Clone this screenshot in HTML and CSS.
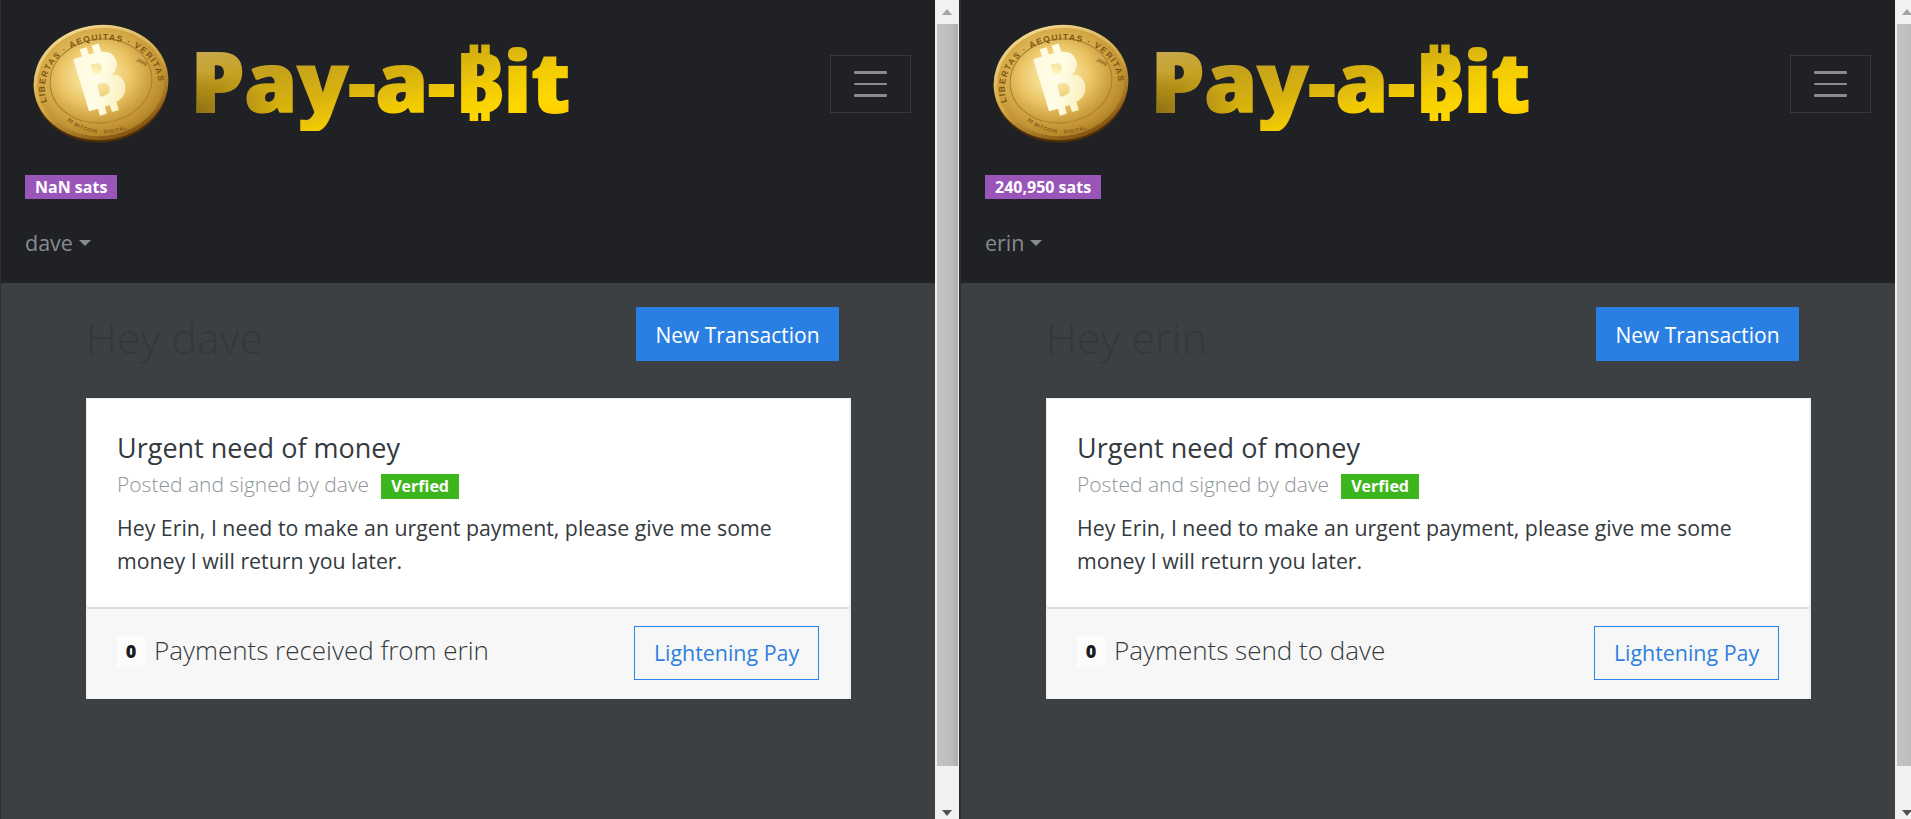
FILE: index.html
```html
<!DOCTYPE html>
<html lang="en">
<head>
<meta charset="utf-8">
<title>Pay-a-Bit</title>
<link rel="stylesheet" href="styles.css">
</head>
<body>
<svg class="defs" width="0" height="0" aria-hidden="true">
  <defs>
    <filter id="heavy" x="-5%" y="-5%" width="110%" height="110%">
      <feMorphology operator="dilate" radius="1 0.4"/>
    </filter>
    <radialGradient id="coinFace" cx="45%" cy="40%" r="68%">
      <stop offset="0" stop-color="#f6d77e"/>
      <stop offset=".6" stop-color="#d6a947"/>
      <stop offset=".85" stop-color="#b98a2c"/>
      <stop offset="1" stop-color="#8f6114"/>
    </radialGradient>
    <linearGradient id="coinRim" x1="0.2" y1="0" x2="0.6" y2="1">
      <stop offset="0" stop-color="#f4dc98"/>
      <stop offset=".55" stop-color="#d2a540"/>
      <stop offset="1" stop-color="#85550f"/>
    </linearGradient>
    <radialGradient id="coinInner" cx="45%" cy="42%" r="62%">
      <stop offset="0" stop-color="#fff6c4"/>
      <stop offset=".55" stop-color="#ecc768"/>
      <stop offset="1" stop-color="#c0902f"/>
    </radialGradient>
    <linearGradient id="coinMark" x1="0" y1="0" x2="1" y2="1">
      <stop offset="0" stop-color="#fff8d6"/>
      <stop offset=".5" stop-color="#fffde8"/>
      <stop offset="1" stop-color="#f8e6a4"/>
    </linearGradient>
    <path id="coinArc" d="M14 78 A57 47 -6 1 1 124 72"/>
    <path id="coinArcLow" d="M34 96 A52 43 -6 0 0 118 86"/>
    <symbol id="coin" viewBox="0 0 136 119">
      <ellipse cx="68" cy="60.500" rx="67.500" ry="58" transform="rotate(-6 68 60.500)" fill="#4f2e08"/>
      <ellipse cx="68" cy="58.500" rx="67.500" ry="57.500" transform="rotate(-6 68 58.500)" fill="url(#coinRim)"/>
      <ellipse cx="68" cy="58" rx="64" ry="54" transform="rotate(-6 68 58)" fill="url(#coinFace)"/>
      <ellipse cx="68" cy="57" rx="51" ry="42" transform="rotate(-6 68 57)" fill="url(#coinInner)" stroke="#a97d26" stroke-width="1"/>
      <text class="coin-ring"><textPath href="#coinArc">LIBERTAS · AEQUITAS · VERITAS</textPath></text>
      <text class="coin-ring-small"><textPath href="#coinArcLow">30 BITCOIN · DIGITAL</textPath></text>
      <text class="coin-year" x="103" y="37" transform="rotate(28 103 37)">2009</text>
      <g transform="translate(66 56) rotate(-17) scale(1.2 1)"><text class="coin-mark" x="0" y="27">₿</text></g>
    </symbol>
  </defs>
</svg>

<section class="pane">
  <header class="top">
    <div class="top-row">
      <div class="brand">
        <svg class="coin-img" aria-hidden="true"><use href="#coin"/></svg>
        <span class="wordmark">Pay-a-₿it</span>
      </div>
      <button class="toggler" type="button" aria-label="Menu"><span></span><span></span><span></span></button>
    </div>
    <span class="sats">NaN sats</span>
    <div class="user">dave<i class="caret"></i></div>
  </header>
  <main class="content">
    <div class="head-row">
      <h1 class="hey">Hey dave</h1>
      <button class="btn-new" type="button">New Transaction</button>
    </div>
    <article class="card">
      <div class="card-body">
        <h2 class="card-title">Urgent need of money</h2>
        <div class="card-sub"><span class="sub-text">Posted and signed by dave</span><span class="verified">Verfied</span></div>
        <p class="card-text">Hey Erin, I need to make an urgent payment, please give me some money I will return you later.</p>
      </div>
      <div class="card-foot">
        <div class="count"><span class="zero">0</span><span class="count-text">Payments received from erin</span></div>
        <button class="btn-pay" type="button">Lightening Pay</button>
      </div>
    </article>
  </main>
</section>
<div class="scroll"><div class="arrow-up"></div><div class="thumb"></div><div class="arrow-down"></div></div>

<section class="pane">
  <header class="top">
    <div class="top-row">
      <div class="brand">
        <svg class="coin-img" aria-hidden="true"><use href="#coin"/></svg>
        <span class="wordmark">Pay-a-₿it</span>
      </div>
      <button class="toggler" type="button" aria-label="Menu"><span></span><span></span><span></span></button>
    </div>
    <span class="sats">240,950 sats</span>
    <div class="user">erin<i class="caret"></i></div>
  </header>
  <main class="content">
    <div class="head-row">
      <h1 class="hey">Hey erin</h1>
      <button class="btn-new" type="button">New Transaction</button>
    </div>
    <article class="card">
      <div class="card-body">
        <h2 class="card-title">Urgent need of money</h2>
        <div class="card-sub"><span class="sub-text">Posted and signed by dave</span><span class="verified">Verfied</span></div>
        <p class="card-text">Hey Erin, I need to make an urgent payment, please give me some money I will return you later.</p>
      </div>
      <div class="card-foot">
        <div class="count"><span class="zero">0</span><span class="count-text">Payments send to dave</span></div>
        <button class="btn-pay" type="button">Lightening Pay</button>
      </div>
    </article>
  </main>
</section>
<div class="scroll"><div class="arrow-up"></div><div class="thumb"></div><div class="arrow-down"></div></div>
</body>
</html>
```
FILE: styles.css
```css
* { box-sizing: border-box; }
html, body { height: 100%; }
body {
  margin: 0;
  width: 1911px;
  height: 819px;
  overflow: hidden;
  display: flex;
  font-family: "Open Sans", "Noto Sans", sans-serif;
  color: #343a40;
  background: #3d4043;
}
.defs { position: absolute; }
.pane {
  flex: 0 0 935px;
  height: 819px;
  display: flex;
  flex-direction: column;
  background: #3d4043;
  border-left: 1px solid #2c2e32;
}
.top {
  height: 283px;
  flex: none;
  background: #1f2125;
  padding: 24px 24px 0 24px;
  display: flex;
  flex-direction: column;
  align-items: flex-start;
}
.top-row {
  width: 100%;
  height: 118px;
  display: flex;
  align-items: center;
  justify-content: space-between;
}
.brand { display: flex; align-items: center; padding-left: 8px; }
.coin-img { width: 136px; height: 119px; flex: none; }
.coin-ring { font: 700 8.5px "Liberation Sans", sans-serif; fill: #7c5714; letter-spacing: 1.3px; }
.coin-ring-small { font: 700 5px "Liberation Sans", sans-serif; fill: #7c5714; letter-spacing: .6px; }
.coin-year { font: 700 5px "Liberation Sans", sans-serif; fill: #8a6420; }
.coin-mark { font: 800 76px "Noto Sans", sans-serif; fill: url(#coinMark); text-anchor: middle; }
.wordmark {
  margin-left: 22px;
  margin-top: -5px;
  font-family: "Open Sans", "Noto Sans", sans-serif;
  font-weight: 800;
  font-size: 84.5px;
  line-height: 100px;
  white-space: nowrap;
  filter: url(#heavy);
  background-image:
    radial-gradient(ellipse 90px 42px at 0 82%, #8a6c14 0, rgba(138,108,20,0) 100%),
    linear-gradient(165deg, #e4ad36 0, #c8a84c 11%, #c4a01c 30%, #d8b20e 50%, #f2cb04 66%, #ffd700 82%, #ffc000 100%);
  -webkit-background-clip: text;
  background-clip: text;
  color: transparent;
}
.toggler {
  width: 81px;
  height: 58px;
  margin-top: 2px;
  padding: 0 23px;
  background: transparent;
  border: 1px solid #36383c;
  display: flex;
  flex-direction: column;
  justify-content: center;
  gap: 9px;
}
.toggler span { display: block; height: 2.5px; border-radius: 1px; background: #8a8b8d; }
.sats {
  margin-top: 33px;
  height: 24px;
  padding: 0 10px;
  background: #9a55b9;
  color: #fff;
  font-size: 16px;
  font-weight: 700;
  line-height: 24px;
}
.user {
  margin-top: 27px;
  font-size: 21.5px;
  line-height: 34px;
  color: #878b8f;
  display: flex;
  align-items: center;
}
.caret {
  margin: 0 0 0 6px;
  border-top: 6px solid #878b8f;
  border-left: 6.5px solid transparent;
  border-right: 6.5px solid transparent;
}
.content { padding: 24px 84px 0 85px; }
.head-row {
  display: flex;
  align-items: flex-start;
  justify-content: space-between;
  padding: 0 12px 0 0;
}
.hey {
  margin: 7px 0 0;
  font-size: 43px;
  line-height: 48px;
  font-weight: 300;
  color: #34373b;
}
.btn-new {
  width: 203px;
  height: 54px;
  padding: 2px 0 0;
  border: 0;
  background: #2a7fe2;
  color: #fff;
  font: 400 21px "Open Sans", sans-serif;
}
.card {
  margin-top: 36px;
  background: #fff;
  border: 1px solid #efefef;
  border-right-width: 2px;
}
.card-body { padding: 30px 30px 0 30px; height: 208px; }
.card-title {
  margin: 0;
  font-size: 27px;
  font-weight: 400;
  line-height: 38px;
}
.card-sub {
  display: flex;
  align-items: center;
  margin-top: 7px;
  color: #8d949a;
  font-size: 21px;
  font-weight: 300;
  line-height: 25px;
}
.sub-text { line-height: 20px; padding-bottom: 5px; }
.verified {
  margin-left: 12px;
  width: 78px;
  height: 25px;
  background: #3cb41b;
  color: #fff;
  font-size: 16px;
  font-weight: 700;
  text-align: center;
}
.card-text {
  max-width: 680px;
  margin: 12px 0 0;
  font-size: 21.3px;
  line-height: 33px;
}
.card-foot {
  height: 91px;
  border-top: 2px solid #dcdcdc;
  background: #f7f7f7;
  padding: 17px 30px 0 30px;
  display: flex;
  align-items: flex-start;
  justify-content: space-between;
}
.count { display: flex; align-items: flex-start; margin-top: 10px; }
.zero {
  width: 28px;
  height: 31px;
  background: #fcfcfc;
  color: #1a1c1f;
  font-size: 18px;
  font-weight: 800;
  line-height: 31px;
  text-align: center;
}
.count-text {
  margin: -1px 0 0 9px;
  font-size: 26px;
  font-weight: 300;
  line-height: 31px;
}
.btn-pay {
  width: 185px;
  height: 54px;
  padding: 0 0 2px;
  background: transparent;
  border: 1px solid #2a85e8;
  color: #2f7fe0;
  font: 400 21.4px "Open Sans", sans-serif;
}
.scroll {
  flex: 0 0 25px;
  height: 819px;
  background: #f1f1f1;
  border-right: 1px solid #26282c;
  display: flex;
  flex-direction: column;
  align-items: flex-start;
}
.thumb {
  flex: 1;
  width: 21px;
  margin: 24px 0 0 2px;
  background: linear-gradient(to right, #c4c4c4, #bdbdbd 70%, #ababab);
}
.arrow-up, .arrow-down {
  flex: none;
  width: 0;
  height: 0;
  margin-left: 7px;
  border-left: 5.5px solid transparent;
  border-right: 5.5px solid transparent;
}
.arrow-up {
  margin-top: 9px;
  margin-bottom: -15px;
  border-bottom: 6px solid #a3a3a3;
}
.arrow-down {
  margin-top: 44px;
  margin-bottom: 3px;
  border-top: 6px solid #505050;
}
```
